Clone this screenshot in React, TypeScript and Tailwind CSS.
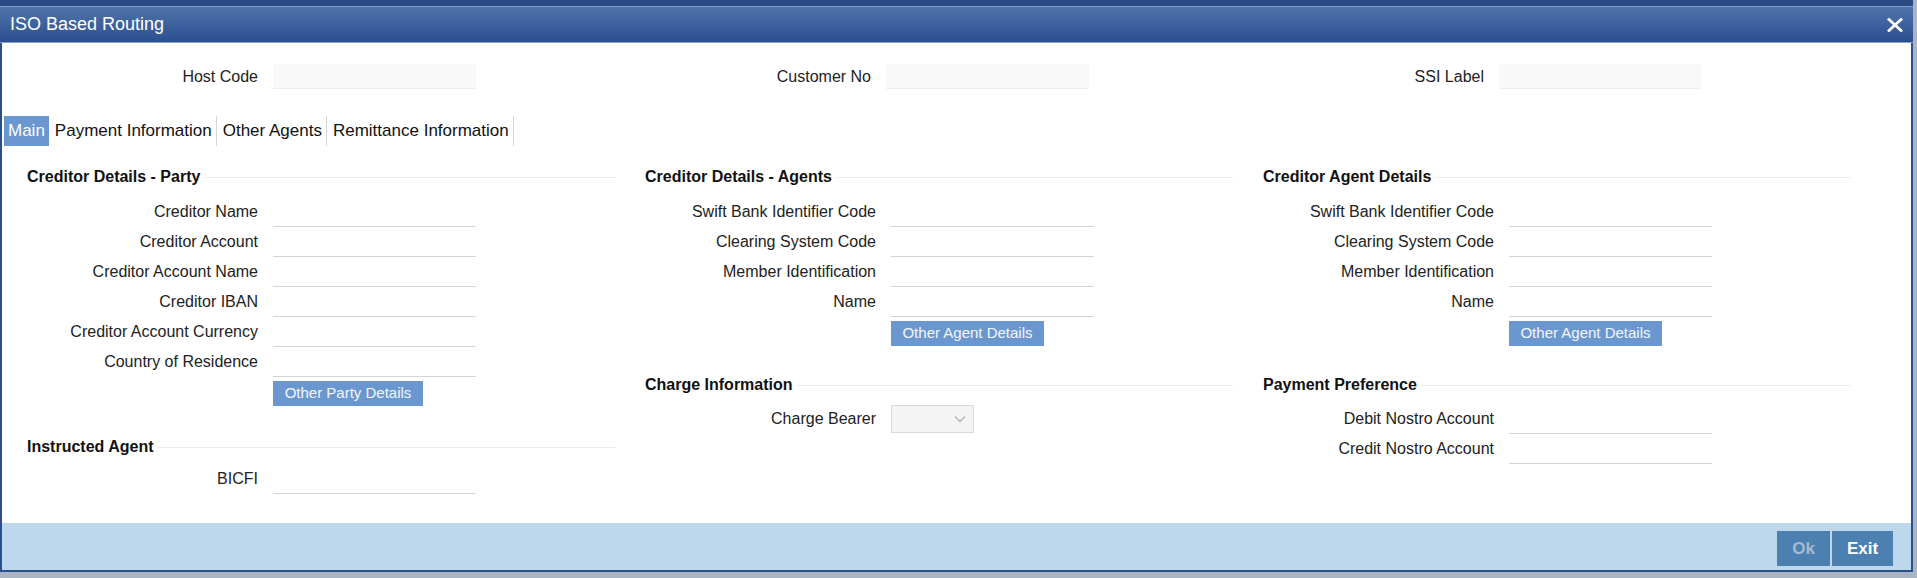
import React from "react";

type Field = { label: string; select?: boolean };

function SectionHeading({ title }: { title: string }) {
  return (
    <div className="flex h-[22px] items-center">
      <span className="font-bold text-[16px] text-[#111] whitespace-nowrap">{title}</span>
      <div className="ml-1 h-px flex-1 bg-[#ebebeb]" />
    </div>
  );
}

function FieldRow({ label, select }: Field) {
  return (
    <div className="flex h-[30px] items-center">
      <span className="w-[231px] text-right text-[16px] text-[#222] whitespace-nowrap">{label}</span>
      {select ? (
        <div className="ml-[15px] flex h-[28px] w-[83px] items-center justify-end border border-[#d9d9d9] bg-[#f4f4f4] pr-[7px]">
          <svg width="12" height="8" viewBox="0 0 12 8" fill="none" stroke="#b5b5b5" strokeWidth="1.4">
            <path d="M1 1.5 6 6.5 11 1.5" />
          </svg>
        </div>
      ) : (
        <div className="ml-[15px] h-[30px] w-[203px] border-b border-[#d4d4d4]" />
      )}
    </div>
  );
}

function SmallButton({ label, width }: { label: string; width: string }) {
  return (
    <div className="ml-[246px] mt-[4px]">
      <button className={`${width} h-[25px] whitespace-nowrap bg-[#6b97d0] text-[15px] text-[#f3f6fb]`}>{label}</button>
    </div>
  );
}

export default function App() {
  const party: Field[] = [
    { label: "Creditor Name" },
    { label: "Creditor Account" },
    { label: "Creditor Account Name" },
    { label: "Creditor IBAN" },
    { label: "Creditor Account Currency" },
    { label: "Country of Residence" },
  ];
  const agents: Field[] = [
    { label: "Swift Bank Identifier Code" },
    { label: "Clearing System Code" },
    { label: "Member Identification" },
    { label: "Name" },
  ];
  const tabs = ["Payment Information", "Other Agents", "Remittance Information"];

  return (
    <div className="flex h-[578px] w-[1917px] flex-col bg-[#aab5c3] font-['Liberation_Sans',Arial,sans-serif]">
      {/* Title bar */}
      <div className="w-[1913px] border-t-[6px] border-[#2a4983]">
        <div className="flex h-[37px] items-center justify-between border-t border-b border-t-[#7f9cc8] border-b-[#8aa0c2] bg-gradient-to-b from-[#4f74ab] to-[#2b4f8f] pl-[10px] pr-[10px]">
          <span className="text-[18px] text-white">ISO Based Routing</span>
          <svg width="16" height="14" viewBox="0 0 16 14" stroke="white" strokeWidth="2.8" strokeLinecap="square">
            <path d="M2 1.5 14 12.5M14 1.5 2 12.5" />
          </svg>
        </div>
      </div>

      {/* Body */}
      <div className="flex h-[480px] w-[1913px] flex-col border-x-2 border-[#2b5090] bg-white">
        {/* Header fields */}
        <div className="mt-[21px] grid grid-cols-[613px_613px_613px] pl-[25px]">
          {["Host Code", "Customer No", "SSI Label"].map((l) => (
            <div key={l} className="flex h-[25px] items-center">
              <span className="w-[231px] text-right text-[16px] text-[#222]">{l}</span>
              <div className="ml-[15px] h-[25px] w-[203px] border-b border-[#eeeeee] bg-[#f9f9f9]" />
            </div>
          ))}
        </div>

        {/* Tabs */}
        <div className="mt-[27px] flex h-[30px] pl-[2px] text-[17px]">
          <div className="flex items-center bg-[#6b97d0] px-[4px] text-white">Main</div>
          {tabs.map((t) => (
            <div key={t} className="flex items-center border-r border-[#d6d6d6] pl-[6px] pr-[4px] text-[#111]">
              {t}
            </div>
          ))}
        </div>

        {/* Sections */}
        <div className="mt-[20px] grid grid-cols-[588px_588px_588px] gap-x-[30px] pl-[25px]">
          <div className="flex flex-col">
            <SectionHeading title="Creditor Details - Party" />
            <div className="mt-[9px] flex flex-col">
              {party.map((f) => (
                <FieldRow key={f.label} {...f} />
              ))}
            </div>
            <SmallButton label="Other Party Details" width="w-[150px]" />
            <div className="mt-[30px]">
              <SectionHeading title="Instructed Agent" />
            </div>
            <div className="mt-[6px]">
              <FieldRow label="BICFI" />
            </div>
          </div>

          <div className="flex flex-col">
            <SectionHeading title="Creditor Details - Agents" />
            <div className="mt-[9px] flex flex-col">
              {agents.map((f) => (
                <FieldRow key={f.label} {...f} />
              ))}
            </div>
            <SmallButton label="Other Agent Details" width="w-[153px]" />
            <div className="mt-[28px]">
              <SectionHeading title="Charge Information" />
            </div>
            <div className="mt-[8px]">
              <FieldRow label="Charge Bearer" select />
            </div>
          </div>

          <div className="flex flex-col">
            <SectionHeading title="Creditor Agent Details" />
            <div className="mt-[9px] flex flex-col">
              {agents.map((f) => (
                <FieldRow key={f.label} {...f} />
              ))}
            </div>
            <SmallButton label="Other Agent Details" width="w-[153px]" />
            <div className="mt-[28px]">
              <SectionHeading title="Payment Preference" />
            </div>
            <div className="mt-[8px] flex flex-col">
              <FieldRow label="Debit Nostro Account" />
              <FieldRow label="Credit Nostro Account" />
            </div>
          </div>
        </div>
      </div>

      {/* Footer */}
      <div className="flex h-[49px] w-[1913px] items-start justify-end gap-[2px] border-x-2 border-b-2 border-[#2b5090] bg-[#bdd8ec] pr-[18px] pt-[8px]">
        <button className="h-[35px] w-[53px] bg-[#4b80b1] text-[17px] font-bold text-[#a4bbd0]">Ok</button>
        <button className="h-[35px] w-[61px] bg-[#4b80b1] text-[17px] font-bold text-white">Exit</button>
      </div>
    </div>
  );
}
